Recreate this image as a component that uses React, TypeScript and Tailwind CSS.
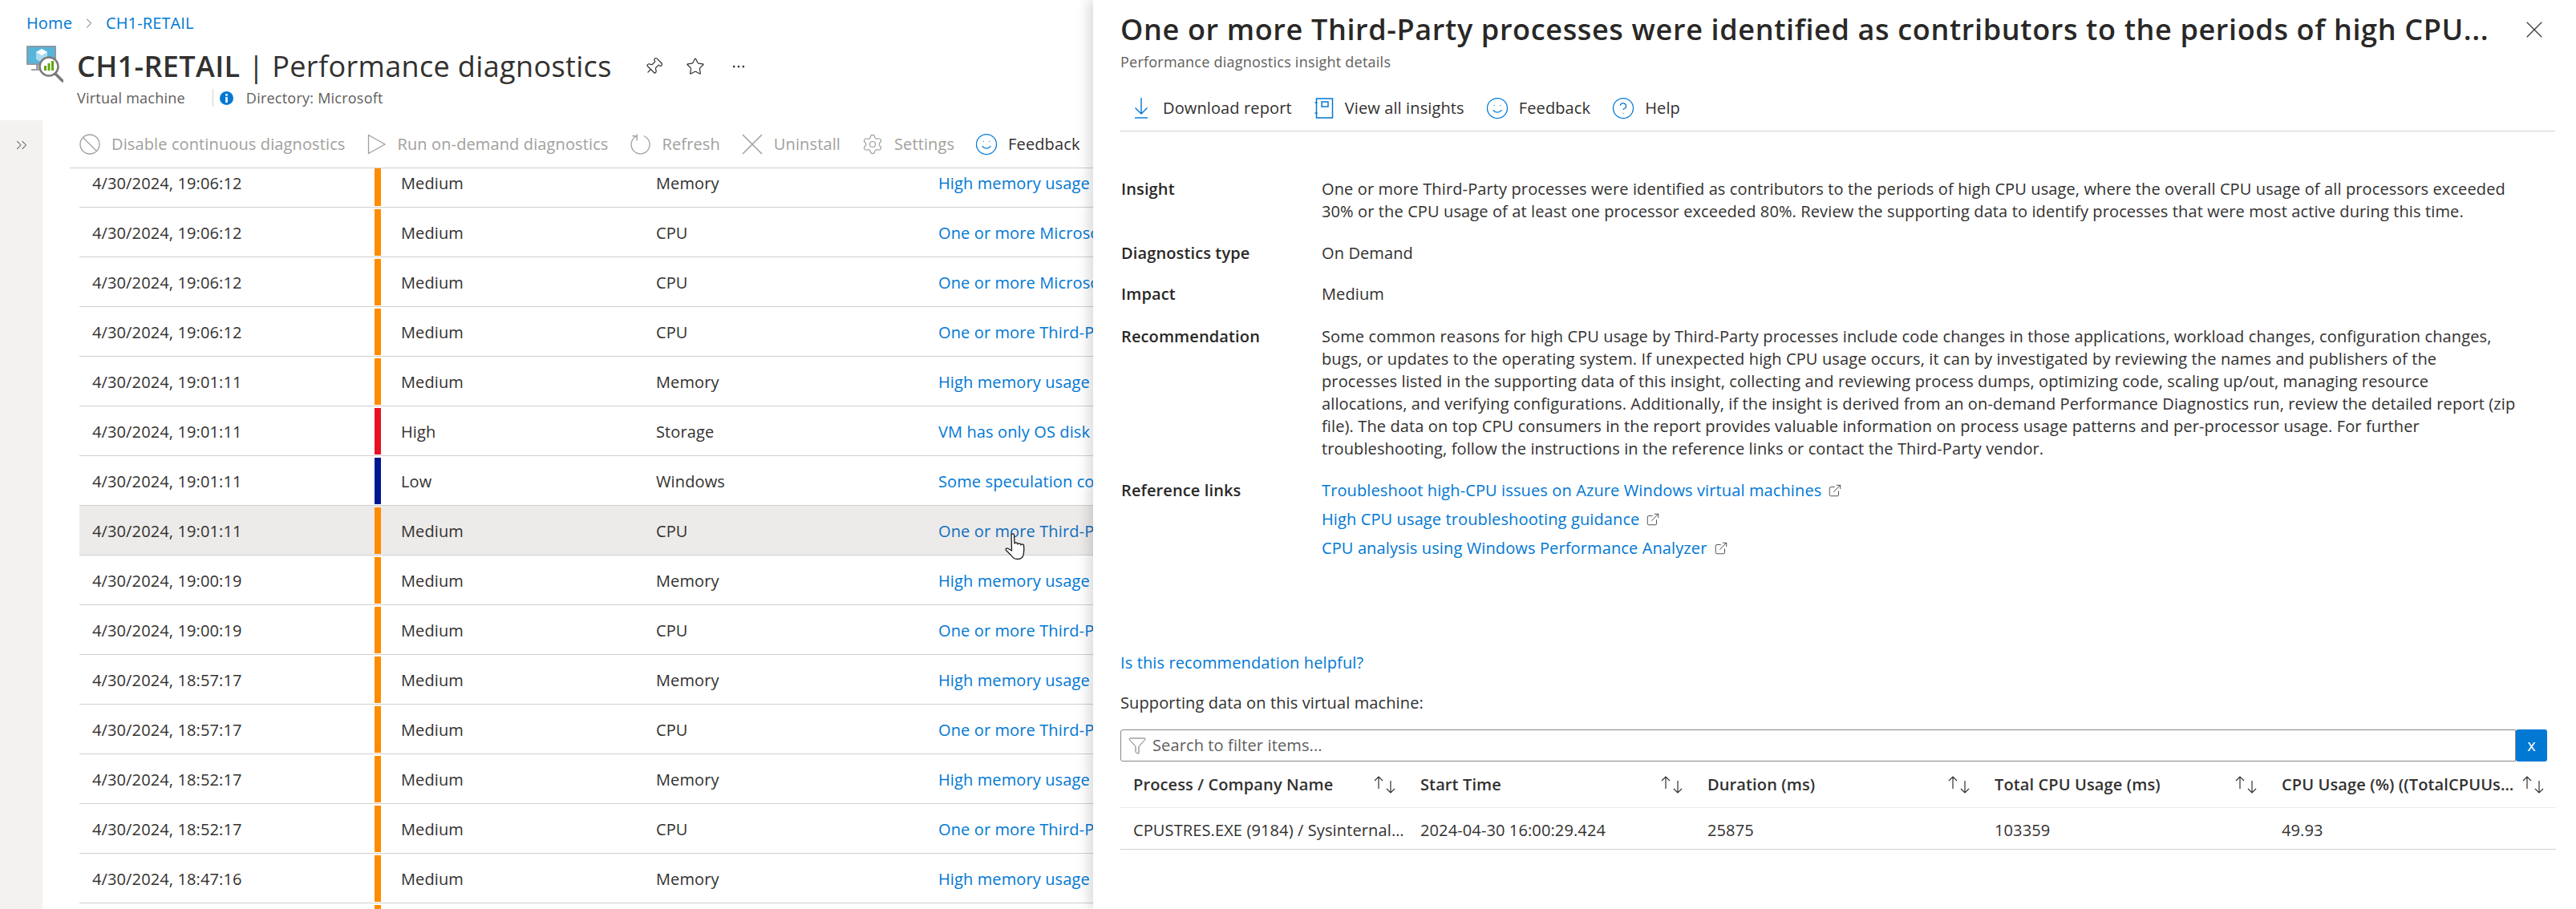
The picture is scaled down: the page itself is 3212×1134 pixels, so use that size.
import React from "react";
import { ChevronRight, ChevronsRight, CircleHelp, Ellipsis, ExternalLink, Funnel, Pin, Settings, Smile, Star } from "lucide-react";

type Row = { time: string; level: "Medium" | "High" | "Low"; type: string; link: string };

const MEM = "High memory usage";
const THIRD = "One or more Third-Party processes were identified";
const MS = "One or more Microsoft processes were identified";

const rows: Row[] = [
  { time: "19:06:12", level: "Medium", type: "Memory", link: MEM },
  { time: "19:06:12", level: "Medium", type: "CPU", link: MS },
  { time: "19:06:12", level: "Medium", type: "CPU", link: MS },
  { time: "19:06:12", level: "Medium", type: "CPU", link: THIRD },
  { time: "19:01:11", level: "Medium", type: "Memory", link: MEM },
  { time: "19:01:11", level: "High", type: "Storage", link: "VM has only OS disk attached" },
  { time: "19:01:11", level: "Low", type: "Windows", link: "Some speculation control settings" },
  { time: "19:01:11", level: "Medium", type: "CPU", link: THIRD },
  { time: "19:00:19", level: "Medium", type: "Memory", link: MEM },
  { time: "19:00:19", level: "Medium", type: "CPU", link: THIRD },
  { time: "18:57:17", level: "Medium", type: "Memory", link: MEM },
  { time: "18:57:17", level: "Medium", type: "CPU", link: THIRD },
  { time: "18:52:17", level: "Medium", type: "Memory", link: MEM },
  { time: "18:52:17", level: "Medium", type: "CPU", link: THIRD },
  { time: "18:47:16", level: "Medium", type: "Memory", link: MEM },
  { time: "18:47:16", level: "Medium", type: "CPU", link: THIRD },
];

const levelColor = {
  Medium: "bg-[#ff8c00]",
  High: "bg-[#e81123]",
  Low: "bg-[#00188f]",
};

const insightLines = [
  "One or more Third-Party processes were identified as contributors to the periods of high CPU usage, where the overall CPU usage of all processors exceeded",
  "30% or the CPU usage of at least one processor exceeded 80%. Review the supporting data to identify processes that were most active during this time.",
];

const recommendationLines = [
  "Some common reasons for high CPU usage by Third-Party processes include code changes in those applications, workload changes, configuration changes,",
  "bugs, or updates to the operating system. If unexpected high CPU usage occurs, it can by investigated by reviewing the names and publishers of the",
  "processes listed in the supporting data of this insight, collecting and reviewing process dumps, optimizing code, scaling up/out, managing resource",
  "allocations, and verifying configurations. Additionally, if the insight is derived from an on-demand Performance Diagnostics run, review the detailed report (zip",
  "file). The data on top CPU consumers in the report provides valuable information on process usage patterns and per-processor usage. For further",
  "troubleshooting, follow the instructions in the reference links or contact the Third-Party vendor.",
];

const links = [
  "Troubleshoot high-CPU issues on Azure Windows virtual machines",
  "High CPU usage troubleshooting guidance",
  "CPU analysis using Windows Performance Analyzer",
];

function VmLogo() {
  return (
    <svg width="46" height="46" viewBox="0 0 46 46" className="mt-[18px] shrink-0">
      <rect x="0" y="0" width="37" height="24" rx="1" fill="#8c9aa5" />
      <rect x="2" y="2" width="33" height="20" fill="#59b4d9" />
      <path d="M6 29h10v2h-10z" fill="#a0a1a2" />
      <path d="M12 24h3v6h-3z" fill="#a0a1a2" />
      <path d="M19 4l7 4v9l-7 4-7-4V8z" fill="#a8dcf0" />
      <path d="M19 4l7 4-7 4-7-4z" fill="#ffffff" />
      <circle cx="28" cy="26" r="11.500" fill="#ffffff" stroke="#7a7a7a" strokeWidth="2.500" />
      <path d="M36 35l9 9" stroke="#7a7a7a" strokeWidth="3.500" strokeLinecap="round" />
      <path d="M22 25h3v6h-3zM26.500 22h3v9h-3zM31 19h3v12h-3z" fill="#5ea60c" />
    </svg>
  );
}

function HandCursor() {
  return (
    <svg width="28" height="34" viewBox="0 0 28 34" className="absolute left-[1252px] top-[665px]">
      <path
        d="M9 2c1-1.500 3-1.500 3.500 0l.5 11c0-1.500 3.500-1.500 3.500 0l.5 1c0-1.500 3.500-1.500 3.500 0l.5 1c0-1.500 3.500-1.500 3.500 0 .5 5 .5 10-1 14-1 2-3 3.500-7 3.500-4 0-6-2-8-5l-6-6c-1-1.500.5-3 2-2.500l5 3z"
        fill="#ffffff"
        stroke="#1a1a1a"
        strokeWidth="1.300"
        strokeLinejoin="round"
      />
    </svg>
  );
}

function ThinX({ size, className }: { size: number; className?: string }) {
  return (
    <svg width={size} height={size} viewBox="0 0 26 26" fill="none" stroke="currentColor" strokeWidth="1.500" className={className}>
      <path d="M1 1l24 24M25 1L1 25" />
    </svg>
  );
}

function DisableIcon() {
  return (
    <svg width="26" height="26" viewBox="0 0 26 26" fill="none" stroke="currentColor" strokeWidth="1.300">
      <circle cx="13" cy="13" r="12" />
      <path d="M4.500 4.500l17 17" />
    </svg>
  );
}

function RunIcon() {
  return (
    <svg width="24" height="26" viewBox="0 0 24 26" fill="none" stroke="currentColor" strokeWidth="1.300">
      <path d="M1.500 1.500L22 13 1.500 24.500z" />
    </svg>
  );
}

function RefreshIcon() {
  return (
    <svg width="26" height="26" viewBox="0 0 26 26" fill="none" stroke="currentColor" strokeWidth="1.300">
      <path d="M16.500 2.500A11.500 11.500 0 1 1 7.500 3" />
      <path d="M8.500 0.500l-.5 8M2.500 2.500l5.500 .5" />
    </svg>
  );
}

function InfoDot() {
  return (
    <svg width="17" height="17" viewBox="0 0 17 17" className="ml-[8px]">
      <circle cx="8.500" cy="8.500" r="8.500" fill="#0078d4" />
      <rect x="7.200" y="3" width="2.600" height="2.600" fill="#ffffff" />
      <rect x="7.200" y="7" width="2.600" height="7" fill="#ffffff" />
    </svg>
  );
}

function ViewInsightsIcon() {
  return (
    <svg width="24" height="26" viewBox="0 0 24 26" fill="none" stroke="#0078d4" strokeWidth="1.500">
      <path d="M2.500 1h20v24h-20z" />
      <path d="M9 5h8v6h-8z" />
      <path d="M0.500 6h3M0.500 19h3" />
    </svg>
  );
}

function DownloadIcon() {
  return (
    <svg width="18" height="26" viewBox="0 0 18 26" fill="none" stroke="#0078d4" strokeWidth="1.400">
      <path d="M9 0v20M1.500 12.500L9 20l7.500-7.500" />
      <path d="M1 25h16" />
    </svg>
  );
}

function SortArrows() {
  return (
    <svg width="27" height="22" viewBox="0 0 27 22" fill="none" stroke="#323130" strokeWidth="1.200" className="shrink-0">
      <path d="M6 16V1M1 6l5-5 5 5" />
      <path d="M21 6v15M16 16l5 5 5-5" />
    </svg>
  );
}

function ToolItem({ icon, label, disabled }: { icon: React.ReactNode; label: string; disabled?: boolean }) {
  return (
    <div className={`flex items-center gap-[14px] whitespace-nowrap ${disabled ? "text-[#a19f9d]" : "text-[#323130]"}`}>
      {icon}
      <span>{label}</span>
    </div>
  );
}

function DetailRow({ label, top, children }: { label: string; top: string; children: React.ReactNode }) {
  return (
    <div className={`flex ${top}`}>
      <div className="w-[251px] shrink-0 pl-px font-semibold text-[#292827]">{label}</div>
      <div>{children}</div>
    </div>
  );
}

function SortHeader({ label }: { label: string }) {
  return (
    <div className="flex min-w-0 items-center justify-between gap-[2px] pl-4 pr-[15px]">
      <span className="truncate font-semibold text-[#323130]">{label}</span>
      <SortArrows />
    </div>
  );
}

export default function App() {
  return (
    <div className="relative flex h-[1134px] w-[3212px] overflow-hidden bg-white font-['Open_Sans','Noto_Sans',sans-serif] text-[20px] tracking-[0.006em] text-[#323130]">
      <div className="flex w-[1363px] shrink-0 flex-col overflow-hidden">
        <header className="h-[150px] shrink-0 pl-[33px]">
          <div className="flex h-[57px] items-center gap-[11px] text-[#0078d4]">
            <span>Home</span>
            <ChevronRight size={20} strokeWidth={1.200} className="text-[#605e5c]" />
            <span>CH1-RETAIL</span>
          </div>
          <div className="-mt-[18px] flex">
            <VmLogo />
            <div className="ml-[17px] mt-[18px]">
              <div className="flex h-[51px] items-center text-[36px] leading-none tracking-[0.01em] whitespace-nowrap text-[#323130]">
                <span className="font-semibold">CH1-RETAIL</span>
                <span className="ml-[10px]">| Performance diagnostics</span>
                <Pin size={24} strokeWidth={1.200} className="ml-[40px] rotate-45" />
                <Star size={24} strokeWidth={1.200} className="ml-[28px]" />
                <Ellipsis size={20} strokeWidth={1.300} className="ml-[32px]" />
              </div>
              <div className="flex h-[28px] items-center text-[18px] tracking-[0.013em] text-[#605e5c]">
                <span>Virtual machine</span>
                <span className="ml-[34px] h-[22px] w-px bg-[#d2d0ce]" />
                <InfoDot />
                <span className="ml-[16px]">Directory: Microsoft</span>
              </div>
            </div>
          </div>
        </header>
        <div className="flex min-h-0 flex-1">
          <aside className="flex w-[53px] shrink-0 justify-center bg-[#f3f2f1] pt-[20px]">
            <ChevronsRight size={22} strokeWidth={1.100} className="text-[#605e5c]" />
          </aside>
          <main className="flex min-w-0 flex-1 flex-col pl-[34px]">
            <div className="flex h-[60px] shrink-0 items-center gap-[27px] border-b border-[#d2d0ce] pl-[12px]">
              <ToolItem disabled label="Disable continuous diagnostics" icon={<DisableIcon />} />
              <ToolItem disabled label="Run on-demand diagnostics" icon={<RunIcon />} />
              <ToolItem disabled label="Refresh" icon={<RefreshIcon />} />
              <ToolItem disabled label="Uninstall" icon={<ThinX size={26} />} />
              <ToolItem disabled label="Settings" icon={<Settings size={28} strokeWidth={1} className="-m-px" />} />
              <ToolItem label="Feedback" icon={<Smile size={30} strokeWidth={1} className="-m-[2px] text-[#0078d4]" />} />
            </div>
            <div className="min-h-0 flex-1 overflow-hidden">
              <div className="-mt-[13px] pl-[12px]">
                {rows.map((r, i) => (
                  <div
                    key={i}
                    className={`flex h-[62px] items-center border-b border-[#d2d0ce] whitespace-nowrap ${i === 7 ? "bg-[#edebe9]" : ""}`}
                  >
                    <div className="w-[368px] shrink-0 pl-4 pt-[3px]">4/30/2024, {r.time}</div>
                    <div className={`h-[58px] w-[8px] shrink-0 ${levelColor[r.level]}`} />
                    <div className="w-[343px] shrink-0 pl-[25px] pt-[3px]">{r.level}</div>
                    <div className="w-[352px] shrink-0 pt-[3px]">{r.type}</div>
                    <div className={`pt-[3px] ${i === 7 ? "text-[#106ebe]" : "text-[#0078d4]"}`}>{r.link}</div>
                  </div>
                ))}
              </div>
            </div>
          </main>
        </div>
      </div>

      <HandCursor />

      <section className="z-10 flex min-w-0 flex-1 flex-col bg-white pl-[34px] pr-[26px] shadow-[-6px_0_14px_rgba(0,0,0,0.14)]">
        <div className="flex h-[74px] shrink-0 items-center justify-between">
          <h1 className="text-[36px] leading-none font-semibold tracking-[0.018em] whitespace-nowrap text-[#292827]">
            One or more Third-Party processes were identified as contributors to the periods of high CPU...
          </h1>
          <ThinX size={20} className="mr-[16px] text-[#323130]" />
        </div>
        <div className="text-[18px] leading-[6px] tracking-[0.013em] text-[#605e5c]">Performance diagnostics insight details</div>
        <div className="mt-[26px] flex h-[58px] shrink-0 items-center gap-[28px] border-b border-[#d2d0ce] pl-[17px]">
          <div className="flex items-center gap-[18px]">
            <DownloadIcon />
            <span>Download report</span>
          </div>
          <div className="flex items-center gap-[14px]">
            <ViewInsightsIcon />
            <span>View all insights</span>
          </div>
          <div className="flex items-center gap-[14px]">
            <Smile size={30} strokeWidth={1} className="-m-[2px] text-[#0078d4]" />
            <span>Feedback</span>
          </div>
          <div className="flex items-center gap-[14px]">
            <CircleHelp size={30} strokeWidth={1} className="-m-[2px] text-[#0078d4]" />
            <span>Help</span>
          </div>
        </div>

        <div className="leading-[28px] whitespace-nowrap text-[#323130]">
          <DetailRow label="Insight" top="mt-[58px]">
            {insightLines.map((l) => (
              <div key={l}>{l}</div>
            ))}
          </DetailRow>
          <DetailRow label="Diagnostics type" top="mt-[24px]">
            On Demand
          </DetailRow>
          <DetailRow label="Impact" top="mt-[23px]">
            Medium
          </DetailRow>
          <DetailRow label="Recommendation" top="mt-[25px]">
            {recommendationLines.map((l) => (
              <div key={l}>{l}</div>
            ))}
          </DetailRow>
          <DetailRow label="Reference links" top="mt-[24px]">
            <div className="flex flex-col gap-[8px] text-[#0078d4]">
              {links.map((l) => (
                <div key={l} className="flex items-center gap-[8px]">
                  <span>{l}</span>
                  <ExternalLink size={18} strokeWidth={1.100} className="text-[#323130]" />
                </div>
              ))}
            </div>
          </DetailRow>
        </div>

        <div className="mt-[115px] leading-[28px] text-[#0078d4]">Is this recommendation helpful?</div>
        <div className="mt-[22px] leading-[28px]">Supporting data on this virtual machine:</div>
        <div className="mt-[19px] flex h-[40px] w-[1779px] shrink-0">
          <div className="flex min-w-0 flex-1 items-center gap-[7px] rounded-l-[3px] border border-[#8a8886] pl-[8px] text-[#605e5c]">
            <Funnel size={24} strokeWidth={0.900} />
            <span>Search to filter items...</span>
          </div>
          <div className="flex w-[39px] items-center justify-center rounded-[3px] bg-[#0078d4] text-white">x</div>
        </div>
        <div className="grid h-[58px] w-[1790px] shrink-0 grid-cols-[repeat(5,358px)] items-center border-b border-[#edebe9]">
          <SortHeader label="Process / Company Name" />
          <SortHeader label="Start Time" />
          <SortHeader label="Duration (ms)" />
          <SortHeader label="Total CPU Usage (ms)" />
          <SortHeader label="CPU Usage (%) ((TotalCPUUsage/Duration)" />
        </div>
        <div className="grid h-[52px] w-[1790px] shrink-0 grid-cols-[repeat(5,358px)] items-center border-b border-[#d2d0ce] pt-[4px] text-[#323130]">
          <div className="truncate pl-4 pr-[2px]">CPUSTRES.EXE (9184) / Sysinternals Suite</div>
          <div className="pl-4">2024-04-30 16:00:29.424</div>
          <div className="pl-4">25875</div>
          <div className="pl-4">103359</div>
          <div className="pl-4">49.93</div>
        </div>
      </section>
    </div>
  );
}
